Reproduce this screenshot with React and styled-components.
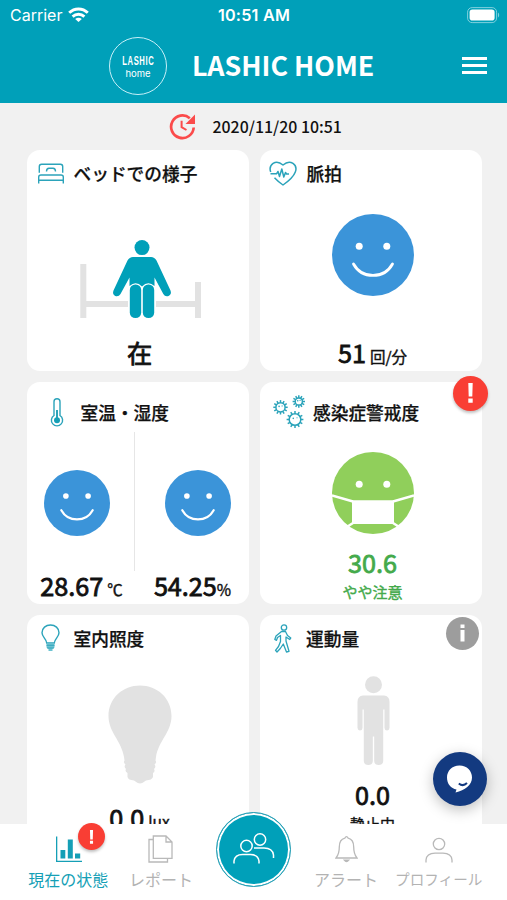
import React from 'react';
import styled, { createGlobalStyle } from 'styled-components';

const GlobalStyle = createGlobalStyle`
  * {
    box-sizing: border-box;
  }

  body {
    margin: 0;
    background-color: #f1f1f1;
    font-family: "Noto Sans CJK JP", "Noto Sans", sans-serif;
    color: #111;
  }

  svg {
    display: block;
    flex-shrink: 0;
  }
`;

const Screen = styled.div`
  position: relative;
  width: 507px;
  height: 900px;
  overflow: hidden;
  display: flex;
  flex-direction: column;
`;

const Header = styled.header`
  flex: none;
  height: 103px;
  background-color: #00a0b9;
  color: #fff;
`;

const StatusBar = styled.div`
  display: grid;
  grid-template-columns: 1fr auto 1fr;
  align-items: center;
  height: 30px;
  padding: 0 7px 0 10px;
  font-family: Inter, "Liberation Sans", sans-serif;
  font-size: 16px;
`;

const Carrier = styled.div`
  display: flex;
  align-items: center;
  gap: 6px;
`;

const Clock = styled.div`
  margin-right: 2px;
  font-size: 16.2px;
  font-weight: 600;
  letter-spacing: 0.2px;
`;

const Battery = styled.div`
  justify-self: end;
`;

const TitleBar = styled.div`
  display: flex;
  align-items: center;
  height: 72px;
  padding: 0 20px 0 109px;
`;

const Logo = styled.div`
  display: flex;
  flex-direction: column;
  align-items: center;
  justify-content: center;
  width: 58px;
  height: 58px;
  padding-top: 2px;
  border: 1.5px solid #c8f0f8;
  border-radius: 50%;
`;

const LogoTop = styled.span`
  font-family: "Liberation Sans", sans-serif;
  font-size: 12.5px;
  font-weight: 700;
  line-height: 14px;
  letter-spacing: 1px;
  transform: scaleX(0.61);
`;

const LogoBottom = styled.span`
  font-family: Inter, sans-serif;
  font-size: 9.5px;
  line-height: 12px;
`;

const Title = styled.h1`
  flex: 1;
  margin: 0 0 2px 25px;
  font-size: 26.8px;
  font-weight: 700;
  line-height: 40px;
`;

const Menu = styled.button`
  display: flex;
  flex-direction: column;
  gap: 4px;
  width: 25px;
  margin-bottom: 1px;
  padding: 0;
  border: 0;
  background: none;
`;

const MenuLine = styled.span`
  height: 3px;
  background-color: #fff;
`;

const Updated = styled.div`
  flex: none;
  display: flex;
  align-items: center;
  gap: 16.5px;
  height: 46px;
  padding: 1px 0 0 169px;
  font-size: 15.9px;
  font-weight: 500;
`;

const Cards = styled.main`
  display: grid;
  grid-template-columns: 222px 222px;
  grid-auto-rows: 221.5px;
  gap: 11px;
  padding: 0.5px 0 0 26.5px;
`;

const Card = styled.section`
  position: relative;
  display: flex;
  flex-direction: column;
  border-radius: 13px;
  background-color: #fff;
`;

const CardHead = styled.div`
  display: flex;
  align-items: center;
  height: ${props => props.$height || 47}px;
  padding-left: ${props => props.$left}px;
  padding-top: ${props => props.$drop || 0}px;
  gap: ${props => props.$gap}px;
`;

const CardTitle = styled.h2`
  margin: 0;
  font-size: 17.7px;
  font-weight: 500;
  line-height: 24px;
  -webkit-text-stroke: 0.25px #111;
`;

const Figure = styled.div`
  flex: 1;
  display: flex;
  justify-content: center;
  align-items: flex-start;
  padding-top: ${props => props.$top}px;
  padding-left: ${props => props.$shift || 0}px;
`;

const Reading = styled.div`
  display: flex;
  justify-content: center;
  align-items: baseline;
  height: 38px;
  padding-left: ${props => props.$shift || 0}px;
  gap: ${props => (props.$gap === undefined ? 4 : props.$gap)}px;
  color: ${props => props.$color || '#111'};
  font-size: 25.2px;
  font-weight: 400;
  line-height: 38px;
  white-space: nowrap;
  -webkit-text-stroke: 0.8px currentColor;
`;

const Unit = styled.span`
  font-size: 15.5px;
  -webkit-text-stroke: 0.4px currentColor;
`;

const Note = styled.div`
  height: 23px;
  padding-left: 4px;
  color: ${props => props.$color || '#111'};
  font-size: 15px;
  font-weight: 400;
  line-height: 22px;
  text-align: center;
  -webkit-text-stroke: 0.4px currentColor;
`;

const Split = styled.div`
  flex: 1;
  display: grid;
  grid-template-columns: 108px 1fr;
`;

const Half = styled.div`
  position: relative;
  display: flex;
  flex-direction: column;
`;

const HalfFace = styled.div`
  flex: 1;
  display: flex;
  justify-content: ${props => props.$side};
  padding: 38px 17.5px 0;
`;

const Divider = styled.span`
  position: absolute;
  top: 0;
  right: 0;
  width: 1px;
  height: 139px;
  background-color: #e6e6e6;
`;

const Badge = styled.span`
  position: absolute;
  top: ${props => props.$top}px;
  right: ${props => props.$right}px;
  display: flex;
  align-items: center;
  justify-content: center;
  width: ${props => props.$size}px;
  height: ${props => props.$size}px;
  border-radius: 50%;
  background-color: ${props => props.$color || '#f93e34'};
  box-shadow: ${props => (props.$flat ? 'none' : '0 2px 3px rgba(0, 0, 0, 0.25)')};
`;

const Chat = styled.button`
  position: absolute;
  left: 432.5px;
  top: 751.5px;
  display: flex;
  align-items: center;
  justify-content: center;
  width: 54.5px;
  height: 54.5px;
  padding: 0;
  border: 0;
  border-radius: 50%;
  background-color: #133a80;
  box-shadow: 0 4px 14px rgba(0, 0, 0, 0.25);
`;

const Nav = styled.nav`
  position: absolute;
  left: 0;
  bottom: 0;
  display: grid;
  grid-template-columns: repeat(5, 1fr);
  width: 507px;
  height: 76px;
  padding: 0 22px;
  background-color: #fff;
`;

const NavItem = styled.div`
  position: relative;
  display: flex;
  flex-direction: column;
  align-items: center;
  padding-top: 11px;
  color: ${props => (props.$active ? '#159fb6' : '#b3b3b3')};
`;

const NavLabel = styled.span`
  margin-top: 4px;
  font-size: ${props => props.$size || 16}px;
  line-height: 24px;
  white-space: nowrap;
`;

const Family = styled.button`
  position: absolute;
  left: 50%;
  top: -12.5px;
  display: flex;
  align-items: center;
  justify-content: center;
  width: 75px;
  height: 75px;
  margin-left: -37.5px;
  padding: 0 0 2px 1px;
  border: 1.5px solid #2a9fb5;
  border-radius: 50%;
  background-color: #00a0b9;
  box-shadow: inset 0 0 0 2px #fff;
`;

const Face = ({ size }) => (
  <svg width={size} height={size} viewBox="-41 -41 82 82">
    <circle r="41" fill="#3b94d9" />
    <circle cx="-13.8" cy="-8.7" r="3.5" fill="#fff" />
    <circle cx="13.8" cy="-8.7" r="3.5" fill="#fff" />
    <path d="M-19.5 9C-11 24.3 11 24.3 19.5 9" fill="none" stroke="#fff" strokeWidth="2.8" strokeLinecap="round" />
  </svg>
);

const MaskFace = () => (
  <svg width="82" height="82" viewBox="-41 -41 82 82">
    <circle r="41" fill="#90cf5b" />
    <circle cx="-13.8" cy="-8.7" r="3.5" fill="#fff" />
    <circle cx="13.8" cy="-8.7" r="3.5" fill="#fff" />
    <path d="M-21 7.3H21V31H-21Z" fill="#fff" />
    <path d="M-41 2.5L-20 8.5M41 2.5L20 8.5M-20 30L-27 34.5M20 30L27 34.5" stroke="#fff" strokeWidth="2.5" />
  </svg>
);

const Wifi = () => (
  <svg width="21" height="16" viewBox="0 0 21 16" fill="none" stroke="#fff" strokeWidth="2.9">
    <path d="M1.2 5.8C6.5 0.7 14.5 0.7 19.8 5.8" />
    <path d="M4.6 9.6C8 6.5 13 6.5 16.4 9.6" />
    <path d="M10.5 15L7.2 12C9.2 10.2 11.8 10.2 13.8 12Z" fill="#fff" stroke="none" />
  </svg>
);

const BatteryIcon = () => (
  <svg width="33" height="17" viewBox="0 0 33 17">
    <rect x="0.6" y="0.6" width="29" height="15" rx="4.5" fill="none" stroke="#7fd0dd" />
    <rect x="2.6" y="2.6" width="25" height="11" rx="2.8" fill="#fff" />
    <path d="M31 5.5C32.6 6.5 32.6 9.5 31 10.5Z" fill="#7fd0dd" />
  </svg>
);

const Refresh = () => (
  <svg width="27" height="27" viewBox="0 0 27 27" fill="none" stroke="#fb4b4b" strokeWidth="2.7">
    <path d="M24.7 14.5A11.3 11.3 0 1 1 20.8 5.2" />
    <path d="M26 1.5V11H16.5Z" fill="#fb4b4b" stroke="none" />
    <path d="M12.6 7.8V14.2L17.5 17" strokeWidth="2" />
  </svg>
);

const BedIcon = () => (
  <svg width="26" height="21" viewBox="0 0 26 21" fill="none" stroke="#2ba3ba" strokeWidth="1.4">
    <path d="M1.3 9.8V3.5Q1.3 1.2 3.6 1.2H22.4Q24.7 1.2 24.7 3.5V9.8" />
    <path d="M8.5 8.5Q8.5 5.2 11 5.2H15Q17.5 5.2 17.5 8.5" />
    <path d="M0.7 20.5V14Q0.7 12 3 12H23Q25.3 12 25.3 14V20.5M0.7 17.3H25.3" />
  </svg>
);

const HeartIcon = () => (
  <svg width="28" height="25" viewBox="0 0 28 25" fill="none" stroke="#2ba3ba" strokeWidth="1.5" strokeLinejoin="round">
    <path d="M1.7 11C-0.8 4 6.5 -2.5 14 4C21.5 -2.5 29 4 26.3 11C24.5 16 19 20.500 14 24C11 22 8 19.500 5.500 16.800" />
    <path d="M1.500 12.800H7.500L9 10.500L10.500 15.500L12.800 8L14.800 16L16.500 11.500L17.500 13H20" />
  </svg>
);

const Thermometer = () => (
  <svg width="14" height="29" viewBox="0 0 14 29" fill="none" stroke="#2ba3ba" strokeWidth="1.4">
    <path d="M4 17.5V3.8A3 3 0 0 1 10 3.8V17.5A5.6 5.6 0 1 1 4 17.5Z" />
    <path d="M7 12V22" strokeWidth="2" />
    <circle cx="7" cy="22.3" r="3" fill="#159fb6" stroke="none" />
  </svg>
);

const Virus = ({ x, y, r }) => (
  <g transform={`translate(${x} ${y})`}>
    <circle r={r} />
    {Array.from({ length: 12 }, (_, i) => (
      <path key={i} d={`M0 ${-r}V${-r - 2.6}`} transform={`rotate(${i * 30})`} />
    ))}
    <circle cx={-r * 0.3} cy={-r * 0.2} r="0.8" fill="#2ba3ba" stroke="none" />
    <circle cx={r * 0.35} cy={-r * 0.3} r="0.6" fill="#2ba3ba" stroke="none" />
  </g>
);

const VirusIcon = () => (
  <svg width="32" height="34" viewBox="0 0 32 34" fill="none" stroke="#2ba3ba" strokeWidth="1.5">
    <Virus x={7.5} y={12.3} r={4.6} />
    <Virus x={25.8} y={6.5} r={3.6} />
    <Virus x={22} y={24.5} r={5.8} />
  </svg>
);

const BulbIcon = () => (
  <svg width="19" height="28" viewBox="0 0 19 28" fill="none" stroke="#2ba3ba" strokeWidth="1.4">
    <path d="M5.7 19C5.4 14.5 1 13 1 8.8C1 4 4.8 1 9.5 1C14.2 1 18 4 18 8.8C18 13 13.6 14.5 13.3 19Z" />
    <path d="M5.5 19.2H13.5V23.5L11.5 25V27H7.5V25L5.5 23.5Z" fill="#6cc3d2" stroke="none" />
    <path d="M5.5 21.3H13.5M6 24H13" strokeWidth="0.9" />
  </svg>
);

const Walker = () => (
  <svg width="18" height="29" viewBox="0 0 18 29" fill="none" stroke="#2ba3ba" strokeWidth="1.3" strokeLinejoin="round">
    <circle cx="10" cy="3.5" r="2.7" />
    <path d="M7.5 7.5H11.5L13.5 11.5L16.8 14L15.8 15.500L12 13V17L15 27.300L12.500 28L9.300 20L6.300 24.500L3 28L1.500 26.300L4.500 22.500L6.500 17.500V11.500L3.500 13.500L2.500 16.300L0.800 15.500L2 12L7.500 7.500Z" />
  </svg>
);

const BedPerson = () => (
  <svg width="122" height="80" viewBox="0 0 122 80">
    <path d="M3.3 24V78M118 42V78M3.3 64H48M76 64H118" stroke="#e2e2e2" strokeWidth="6" fill="none" />
    <g fill="#00a0b9">
      <circle cx="62" cy="7.6" r="7.5" />
      <path d="M53 17H71Q74.5 17 76.5 20.5L90.5 50.5Q92 54 88.5 56Q85 57 83.3 54L74.5 37.5V46Q68 40.5 62 46.5Q56 40.5 49.5 46V37.5L40.5 54Q38.7 57 35.3 56Q32 54 33.5 50.5L47.5 20.5Q49.5 17 53 17Z" />
      <rect x="49.8" y="44.5" width="11.4" height="33.5" rx="5.5" />
      <rect x="62.8" y="44.5" width="11.4" height="33.5" rx="5.5" />
    </g>
  </svg>
);

const BigBulb = () => (
  <svg width="64" height="99" viewBox="0 0 64 99">
    <path fill="#e2e2e2" d="M32 0.5C49 0.5 63.5 13 63.5 31C63.5 47 50.5 56 48 72L47.5 75.5Q49 77.500 46.500 79.500Q48.500 81.500 46 84Q47.500 86.500 45 88V92Q44 95 38 95.500Q35 98 32 98.500Q29 98 26 95.500Q20 95 19.500 92V88Q16.500 86.500 18 84Q15.500 81.500 17.500 79.500Q15 77.500 16.500 75.500L16 72C13.500 56 0.500 47 0.500 31C0.500 13 15 0.500 32 0.500Z" />
  </svg>
);

const Standing = () => (
  <svg width="33" height="90" viewBox="0 0 33 90" fill="#e2e2e2">
    <circle cx="16.5" cy="8.8" r="8.5" />
    <path d="M6 19.5H27Q32.5 20 32.5 26V52Q32 54.5 30 54.5Q27.8 54.5 27.5 52V33.5H26.2V85Q26 89 21.7 89Q17.3 89 17.2 85V60.5H15.8V85Q15.7 89 11.3 89Q7 89 6.8 85V33.5H5.5V52Q5.2 54.5 3 54.5Q1 54.5 0.5 52V26Q0.5 20 6 19.5Z" />
  </svg>
);

const ChatIcon = () => (
  <svg width="27" height="28" viewBox="0 0 27 28">
    <path fill="#fff" d="M13.5 0.5C21 0.5 26 6 26 12.5C26 20 19 25 9.5 27.5L10.500 24.500C5 23.500 1 19 1 12.500C1 6 6 0.500 13.500 0.500Z" />
    <path d="M12.800 18.500Q17 22 21 18" fill="none" stroke="#133a80" strokeWidth="2" />
  </svg>
);

const Exclamation = ({ height }) => (
  <svg width="5" height={height} viewBox="0 0 5 20">
    <path d="M0.3 0H4.7L4.3 13.5H0.7ZM0.3 15.5H4.7V19.8H0.3Z" fill="#fff" />
  </svg>
);

const InfoMark = () => (
  <svg width="5" height="18" viewBox="0 0 5 18">
    <path d="M0.5 0.5H4.5V4H0.5ZM0.5 6H4.5V17.5H0.5Z" fill="#fff" />
  </svg>
);

const ChartIcon = () => (
  <svg width="27" height="28" viewBox="0 0 27 28" fill="#159fb6">
    <path d="M1 1.5H2.3V25.8H27V27H1Z" />
    <path d="M5.5 15H10.3V23.5H5.5ZM12.8 4.5H17.8V23.5H12.8ZM20 18.5H25.2V23.5H20Z" />
  </svg>
);

const ReportIcon = () => (
  <svg width="25" height="28" viewBox="0 0 25 28" fill="none" stroke="#b9b9b9" strokeWidth="1.3">
    <path d="M5.3 1H18L24 7V23.3H5.3ZM18 1V7H24" />
    <path d="M5 4.5H1V27H19.5V23.5" />
  </svg>
);

const BellIcon = () => (
  <svg width="23" height="28" viewBox="0 0 23 28" fill="none" stroke="#b9b9b9" strokeWidth="1.3">
    <path d="M1 23Q4.3 19 4.3 12C4.3 7 6.5 4 9.8 3.2Q11.5 0 13.2 3.2C16.5 4 18.7 7 18.7 12Q18.7 19 22 23Z" />
    <path d="M9.3 25.2H13.7Q11.5 27.8 9.3 25.2Z" fill="#b9b9b9" />
  </svg>
);

const ProfileIcon = () => (
  <svg width="28" height="28" viewBox="0 0 28 28" fill="none" stroke="#b9b9b9" strokeWidth="1.3">
    <circle cx="14" cy="9" r="5.7" />
    <path d="M1 27.5V25Q1.5 18.5 10 18.2H18Q26.5 18.5 27 25V27.5" />
  </svg>
);

const FamilyIcon = () => (
  <svg width="42" height="32" viewBox="0 0 42 32" fill="none" stroke="#fff" strokeWidth="1.5">
    <circle cx="13.5" cy="14" r="5.7" />
    <path d="M1 31.500V29Q2 22.500 9.500 22.500H17.500Q25 22.500 26 29V31.500" />
    <circle cx="27" cy="7.500" r="5.700" />
    <path d="M21 16H31Q39.500 16 40.500 23V26" />
  </svg>
);

class App extends React.Component{

  render(){

    return (
      <>
        <GlobalStyle />
        <Screen>

          <Header>
            <StatusBar>
              <Carrier>Carrier <Wifi /></Carrier>
              <Clock>10:51 AM</Clock>
              <Battery><BatteryIcon /></Battery>
            </StatusBar>
            <TitleBar>
              <Logo>
                <LogoTop>LASHIC</LogoTop>
                <LogoBottom>home</LogoBottom>
              </Logo>
              <Title>LASHIC HOME</Title>
              <Menu aria-label="menu">
                <MenuLine />
                <MenuLine />
                <MenuLine />
              </Menu>
            </TitleBar>
          </Header>

          <Updated>
            <Refresh />
            2020/11/20 10:51
          </Updated>

          <Cards>
            <Card>
              <CardHead $left={11} $gap={10}>
                <BedIcon />
                <CardTitle>ベッドでの様子</CardTitle>
              </CardHead>
              <Figure $top={43} $shift={6}><BedPerson /></Figure>
              <Reading $shift={4}>在</Reading>
            </Card>

            <Card>
              <CardHead $left={9} $gap={10}>
                <HeartIcon />
                <CardTitle>脈拍</CardTitle>
              </CardHead>
              <Figure $top={17} $shift={5}><Face size={82} /></Figure>
              <Reading $shift={4}>51<Unit>回/分</Unit></Reading>
            </Card>

            <Card>
              <CardHead $left={23} $gap={17} $height={50} $drop={10}>
                <Thermometer />
                <CardTitle>室温・湿度</CardTitle>
              </CardHead>
              <Split>
                <Half>
                  <HalfFace $side="flex-start"><Face size={66} /></HalfFace>
                  <Reading $shift={2}>28.67<Unit>℃</Unit></Reading>
                  <Divider />
                </Half>
                <Half>
                  <HalfFace $side="flex-end"><Face size={66} /></HalfFace>
                  <Reading $gap={0} $shift={2}>54.25<Unit>%</Unit></Reading>
                </Half>
              </Split>
            </Card>

            <Card>
              <CardHead $left={13} $gap={8.5} $height={50} $drop={10}>
                <VirusIcon />
                <CardTitle>感染症警戒度</CardTitle>
              </CardHead>
              <Figure $top={19.5} $shift={5}><MaskFace /></Figure>
              <Reading $color="#44aa4b" $shift={4}>30.6</Reading>
              <Note $color="#44aa4b">やや注意</Note>
              <Badge $top={-6.5} $right={-6} $size={35}><Exclamation height={20} /></Badge>
            </Card>

            <Card>
              <CardHead $left={14} $gap={14}>
                <BulbIcon />
                <CardTitle>室内照度</CardTitle>
              </CardHead>
              <Figure $top={23} $shift={5}><BigBulb /></Figure>
              <Reading $shift={4}>0.0<Unit>lux</Unit></Reading>
            </Card>

            <Card>
              <CardHead $left={14} $gap={14.5}>
                <Walker />
                <CardTitle>運動量</CardTitle>
              </CardHead>
              <Figure $top={14} $shift={5}><Standing /></Figure>
              <Reading $shift={4}>0.0</Reading>
              <Note>静止中</Note>
              <Badge $top={2} $right={2.5} $size={33} $color="#9d9d9d" $flat><InfoMark /></Badge>
            </Card>
          </Cards>

          <Chat aria-label="chat"><ChatIcon /></Chat>

          <Nav>
            <NavItem $active>
              <ChartIcon />
              <NavLabel>現在の状態</NavLabel>
              <Badge $top={-1} $right={9.5} $size={27}><Exclamation height={14} /></Badge>
            </NavItem>
            <NavItem>
              <ReportIcon />
              <NavLabel>レポート</NavLabel>
            </NavItem>
            <NavItem>
              <Family aria-label="family"><FamilyIcon /></Family>
            </NavItem>
            <NavItem>
              <BellIcon />
              <NavLabel>アラート</NavLabel>
            </NavItem>
            <NavItem>
              <ProfileIcon />
              <NavLabel $size={14.6}>プロフィール</NavLabel>
            </NavItem>
          </Nav>

        </Screen>
      </>
    );
  }
}

export default App;
